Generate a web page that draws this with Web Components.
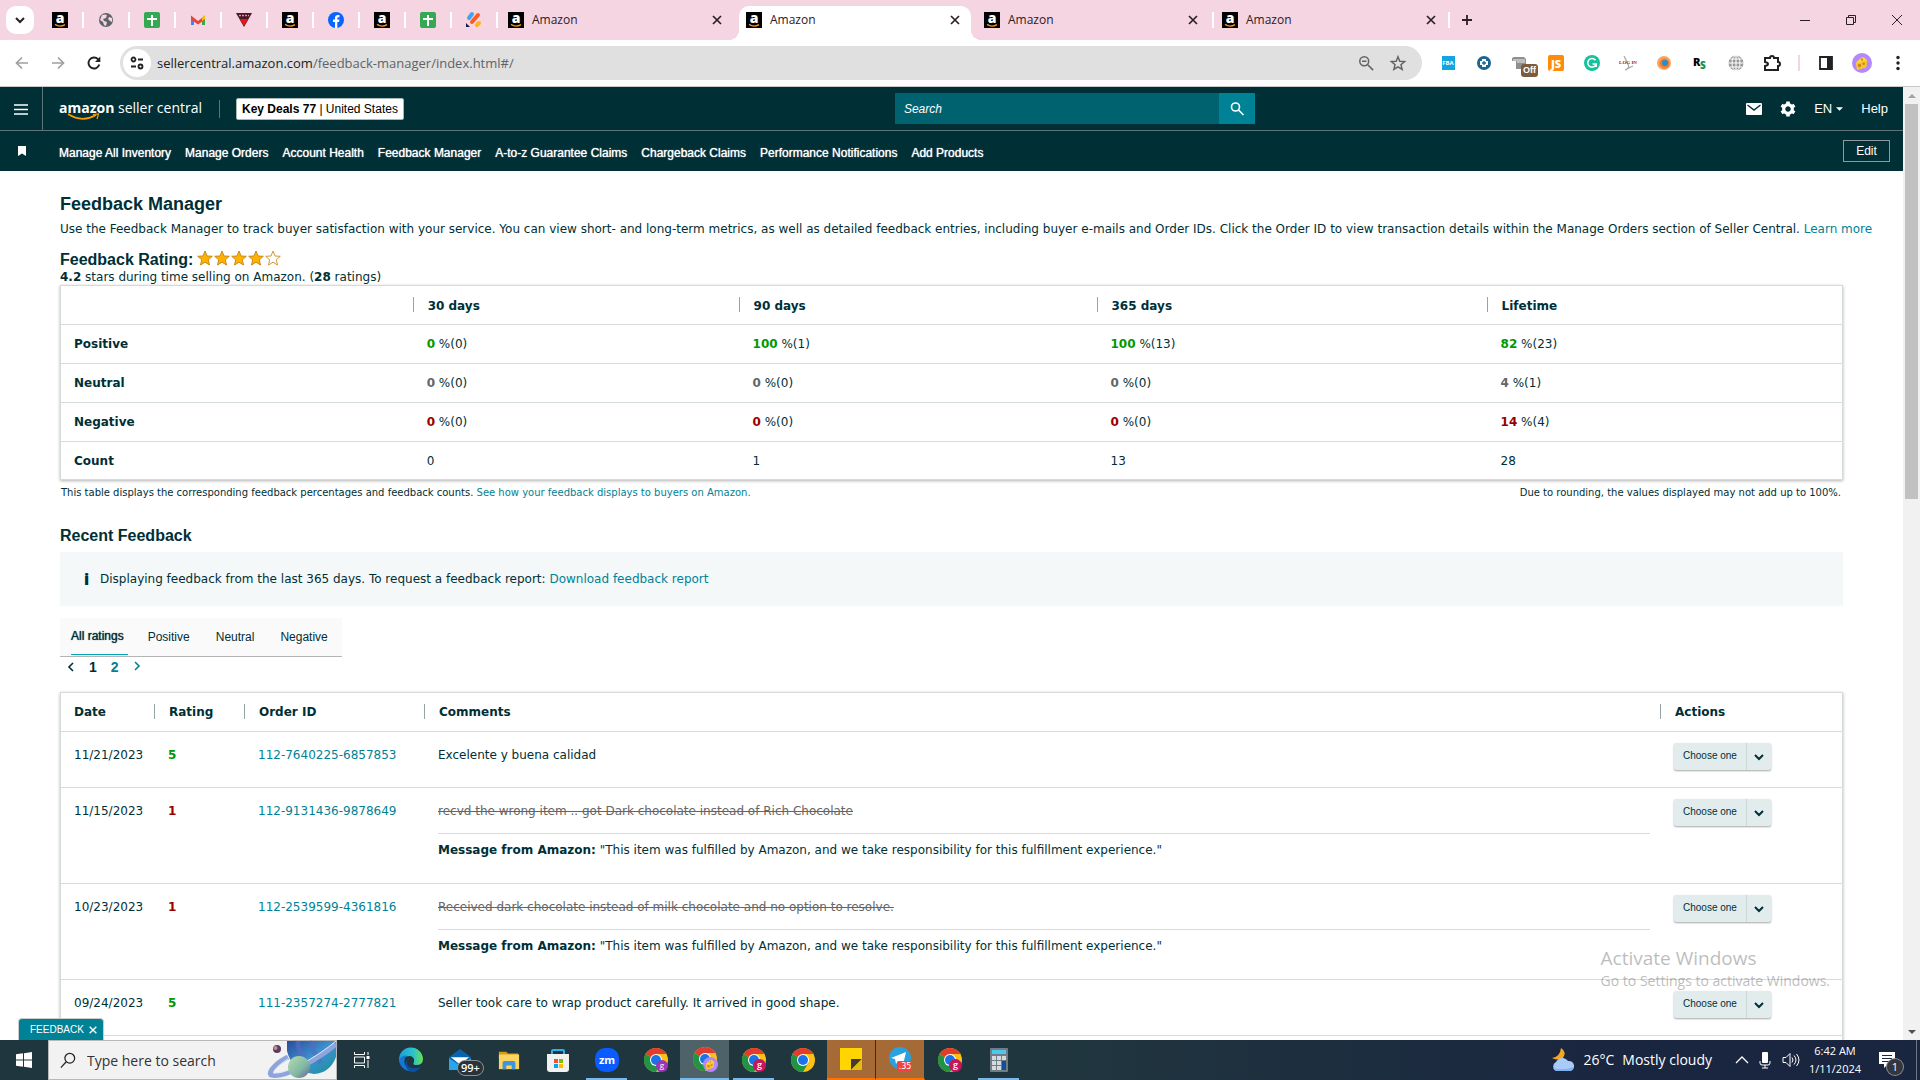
<!DOCTYPE html>
<html lang="en">
<head>
<meta charset="utf-8">
<title>Feedback Manager</title>
<style>
  :root {
    --ink: #002f36;
    --link: #008296;
    --line: #d5dbdb;
    --green: #009900;
    --red: #990000;
    --font-body: "DejaVu Sans", Verdana, sans-serif;
    --font-nav: "Liberation Sans", Arial, sans-serif;
    --font-system: "Open Sans", "Segoe UI", sans-serif;
  }

  body {
    margin: 0;
    height: 100vh;
    overflow: hidden;
    background: #fff;
    color: var(--ink);
    font-family: var(--font-body);
    font-size: 12px;
    line-height: 16px;
  }
</style>
</head>
<body>
<ui-desktop>
  <ui-tab-strip slot="browser"></ui-tab-strip>
  <ui-toolbar slot="browser"></ui-toolbar>
  <ui-page slot="page">
    <ui-header></ui-header>
    <ui-feedback-manager></ui-feedback-manager>
  </ui-page>
  <ui-taskbar slot="taskbar"></ui-taskbar>
</ui-desktop>

<script>
const chromeArt = `
  <circle cx="12" cy="12" r="12" fill="#fbc116"/>
  <path d="M12 12 1.6 6A12 12 0 0 1 22.4 6H12z" fill="#e33b2e"/>
  <path d="M12 12 1.6 6A12 12 0 0 0 12 24l5.2-9z" fill="#229342"/>
  <circle cx="12" cy="12" r="6" fill="#fff"/>
  <circle cx="12" cy="12" r="5" fill="#1a73e8"/>`;

const cheeseArt = `
  <path d="M5 11 12 5q4 0 6 4l-1 8-11 3z" fill="#fdd835"/>
  <path d="M5 12 18 9l-1 8-11 3z" fill="#fbc02d"/>
  <circle cx="9" cy="15" r="2" fill="#c98a10"/><circle cx="14" cy="13" r="1.5" fill="#c98a10"/><circle cx="12" cy="8" r="1.3" fill="#c98a10"/>`;

const icons = {
  amazon: ['0 0 16 16', `<rect width="16" height="16"/><text x="8" y="11" text-anchor="middle" font-family="Open Sans" font-weight="800" font-size="14" fill="#fff">a</text><path d="M3 12.4q5 3.2 10 .2" fill="none" stroke="#f90" stroke-width="1.3"/>`],
  globe: ['0 0 16 16', `<circle cx="8" cy="8" r="7" fill="#5f6368"/><path d="M4 3q3-1 5 0l-1 3-3 1 1 2 3 1-1 4-2-1-1-3-3-2zM11 5l3 1v4l-2-1-2-2z" fill="#f6d5e3"/>`],
  sheets: ['0 0 16 16', `<rect width="16" height="16" rx="2" fill="#34a853"/><path d="M8 3v11M3 7h10" stroke="#fff" stroke-width="2"/>`],
  gmail: ['0 0 16 16', `<path d="M1 4v9h3V7z" fill="#4285f4"/><path d="M15 4v9h-3V7z" fill="#34a853"/><path d="M1 3.500 8 9l7-5.500v4L8 12.500 1 7.500z" fill="#ea4335"/><path d="M12 6l3-3v4l-3 2z" fill="#fbbc04"/>`],
  shield: ['0 0 16 16', `<path d="M0 1h16L8 15z" fill="#4a1526"/><path d="M4 7h8l-4 7z" fill="#f01414"/><path d="M3 3.500h10" stroke="#d99" stroke-width="1.500" stroke-dasharray="2 1"/>`],
  facebook: ['0 0 16 16', `<circle cx="8" cy="8" r="8" fill="#0866ff"/><path d="M7 16V10H5V7.500h2V6q0-3 3-3h1.500v2.300H10.300q-1 0-1 1.200v1h2.200L11 10H9.300v6z" fill="#fff"/>`],
  jungle: ['0 0 16 16', `<g stroke-width="4" stroke-linecap="round"><path d="M3 6l3-4" stroke="#3da5f4"/><path d="M6 10l6-7" stroke="#ff5a1f"/><path d="M11 13l2-2" stroke="#fdb515"/></g><path d="M0 11l4 4H0z" fill="#1d1650"/>`],
  chevron: ['0 0 12 12', `<path d="M2 4l4 4 4-4" fill="none" stroke="currentColor" stroke-width="2"/>`],
  chevronLeft: ['2 0 8 12', `<path d="M8 2 4 6l4 4" fill="none" stroke="currentColor" stroke-width="1.600"/>`],
  chevronRight: ['2 0 8 12', `<path d="M4 2l4 4-4 4" fill="none" stroke="currentColor" stroke-width="1.600"/>`],
  close: ['0 0 12 12', `<path d="M2 2l8 8M10 2l-8 8" stroke="currentColor" stroke-width="1.700"/>`],
  closeThin: ['0 0 12 12', `<path d="M1 1l10 10M11 1 1 11" stroke="currentColor"/>`],
  plus: ['0 0 12 12', `<path d="M6 1v10M1 6h10" stroke="currentColor" stroke-width="1.800"/>`],
  minimize: ['0 0 12 12', `<path d="M1 6.500h10" stroke="currentColor"/>`],
  restore: ['0 0 12 12', `<path d="M1.500 3.500h7v7h-7zM3.500 3.500v-2h7v7h-2" fill="none" stroke="currentColor"/>`],
  back: ['0 0 16 16', `<path d="M14 8H3M8 2.500 2.500 8 8 13.500" fill="none" stroke="currentColor" stroke-width="1.700"/>`],
  forward: ['0 0 16 16', `<path d="M2 8h11M8 2.500 13.500 8 8 13.500" fill="none" stroke="currentColor" stroke-width="1.700"/>`],
  reload: ['0 0 16 16', `<path d="M13.300 9.500A5.500 5.500 0 1 1 12 4.200L13.500 6" fill="none" stroke="currentColor" stroke-width="1.900"/><path d="M14.300 1.500v5.500H9z" fill="currentColor"/>`],
  tune: ['0 0 16 16', `<g fill="none" stroke="currentColor" stroke-width="1.800"><circle cx="4.500" cy="4.500" r="2"/><circle cx="11.500" cy="11.500" r="2"/><path d="M9 4.500h5M2 11.500h5"/></g>`],
  zoomOut: ['0 0 18 18', `<g fill="none" stroke="currentColor" stroke-width="1.700"><circle cx="7" cy="7" r="5"/><path d="M11 11l6 6M4.500 7h5"/></g>`],
  star: ['0 0 18 18', `<path d="M9 2l2 5 5.500.400-4.200 3.500 1.400 5.300L9 13.400l-4.700 2.800 1.400-5.300L1.500 7.400 7 7z" fill="none" stroke="currentColor" stroke-width="1.600"/>`],
  extFba: ['0 0 16 16', `<rect x="2" y="1" width="13" height="14" fill="#12a5df"/><text x="8" y="10" text-anchor="middle" font-family="Open Sans" font-weight="700" font-size="6" fill="#fff">FBA</text>`],
  extPlus: ['0 0 16 16', `<circle cx="8" cy="8" r="7" fill="#1d6491"/><path d="M8 4v8M4 8h8" stroke="#fff" stroke-width="4" /><path d="M8 6v4M6 8h4" stroke="#1d6491" stroke-width="1.300"/>`],
  extCard: ['0 0 16 16', `<path d="M0 6V3l2-1h10l2 2v10H4V6z" fill="#8f8f8f"/><path d="M1 5h12M5 7h8" stroke="#eee"/>`],
  extJs: ['0 0 16 16', `<rect width="16" height="16" rx="2" fill="#ff8a0c"/><text x="8" y="13" text-anchor="middle" font-family="Open Sans" font-weight="800" font-size="11" fill="#fff">JS</text>`],
  extGram: ['0 0 16 16', `<circle cx="8" cy="8" r="8" fill="#15c39a"/><path d="M11.500 5.200A4.300 4.300 0 1 0 12.200 9H8.500M12.200 8.500V12" fill="none" stroke="#fff" stroke-width="1.500"/>`],
  extLogin: ['0 0 16 16', `<path d="M4 1l3 6 2 5-3 3M13 11l-8 4" fill="none" stroke="#aaa" stroke-width="1.300"/><text x="8" y="9" text-anchor="middle" font-family="Liberation Serif" font-weight="700" font-size="5" fill="#922">LOG IN</text>`],
  extEye: ['0 0 16 16', `<circle cx="8" cy="8" r="7" fill="#f6a66a"/><circle cx="8.500" cy="8.500" r="5" fill="#fb7b25"/><circle cx="9" cy="8" r="3" fill="#1e90d6"/>`],
  extRs: ['0 0 16 16', `<text x="1" y="11" font-family="Open Sans" font-weight="800" font-size="11">R</text><text x="8" y="14" font-family="Open Sans" font-weight="800" font-size="10" fill="#17924c">S</text>`],
  extGlobe: ['0 0 16 16', `<circle cx="8" cy="8" r="7.500" fill="#999"/><g fill="none" stroke="#fff"><path d="M8 0v16M0 8h16M2 4h12M2 12h12"/><ellipse cx="8" cy="8" rx="4" ry="7.500"/></g>`],
  puzzle: ['0 0 18 18', `<path d="M2 4h5a2 2 0 0 1 4 0h4v4a2 2 0 0 1 0 4v4H2v-4q3-.500 3-2T2 8z" fill="none" stroke="currentColor" stroke-width="2"/>`],
  panel: ['0 0 16 16', `<path d="M2 2h12v12H2z" fill="none" stroke="currentColor" stroke-width="1.800"/><path d="M9 2h5v12H9z" fill="currentColor"/>`],
  cheese: ['0 0 24 24', `<circle cx="12" cy="12" r="12" fill="#b388ff"/>${cheeseArt}`],
  dots: ['0 0 16 16', `<g fill="currentColor"><circle cx="8" cy="2.500" r="1.700"/><circle cx="8" cy="8" r="1.700"/><circle cx="8" cy="13.500" r="1.700"/></g>`],
  menu: ['0 0 14 12', `<path d="M0 2h14M0 6.500h14M0 11h14" stroke="currentColor" stroke-width="1.600"/>`],
  search: ['0 0 16 16', `<g fill="none" stroke="currentColor" stroke-width="1.600"><circle cx="6.500" cy="6" r="4"/><path d="M9.500 9l5 5"/></g>`],
  mail: ['0 0 16 14', `<rect y="1" width="16" height="12" rx="1" fill="currentColor"/><path d="M1.500 3 8 8l6.500-5" fill="none" stroke="#002f36" stroke-width="1.400"/>`],
  gear: ['0 0 16 16', `<circle cx="8" cy="8" r="4.200" fill="none" stroke="currentColor" stroke-width="3.400"/><g stroke="currentColor" stroke-width="3.600"><path d="M8 .500v3M8 12.500v3M1.500 4.200l2.600 1.500M11.900 10.300l2.600 1.500M1.500 11.800l2.600-1.500M11.900 5.700l2.600-1.500"/></g><circle cx="8" cy="8" r="2.500" fill="#002f36"/>`],
  caret: ['0 0 8 4', `<path d="M0 0h8L4 4z" fill="currentColor"/>`],
  caretUp: ['0 0 8 4', `<path d="M0 4h8L4 0z" fill="currentColor"/>`],
  bookmark: ['0 0 8 10', `<path d="M0 0h8v10L4 7.500 0 10z" fill="currentColor"/>`],
  smile: ['0 0 34 8', `<path d="M1 1q14 9 28 1" fill="none" stroke="#f90" stroke-width="1.700"/><path d="M26 1.500 31.500 1 30 6" fill="none" stroke="#f90" stroke-width="1.200"/>`],
  starFull: ['0 0 16 16', `<path d="M8 1l2 5 5.300.300-4 3.500L12.500 15 8 12.200 3.500 15l1.200-5.200-4-3.500L6 6z" fill="#ffb300" stroke="#c98a1b"/>`],
  starEmpty: ['0 0 16 16', `<path d="M8 1l2 5 5.300.300-4 3.500L12.500 15 8 12.200 3.500 15l1.200-5.200-4-3.500L6 6z" fill="#fff" stroke="#d19a34"/>`],
  windows: ['0 0 16 16', `<path d="M0 2.300 7 1.300v6.200H0zM8 1.200 16 0v7.500H8zM0 8.500h7v6.200L0 13.700zM8 8.500h8V16l-8-1.200z" fill="#fff"/>`],
  lens: ['0 0 18 18', `<g fill="none" stroke="currentColor" stroke-width="1.400"><circle cx="11" cy="7" r="5.500"/><path d="M7 11l-6 6.500"/></g>`],
  planets: ['0 0 68 38', `
    <defs>
      <linearGradient id="p" x1="0" x2="1" y1="0" y2="1"><stop offset="0" stop-color="#2c4a9c"/><stop offset=".5" stop-color="#3c93cf"/><stop offset="1" stop-color="#1c8f9a"/></linearGradient>
      <linearGradient id="m" x1="0" x2="1" y1="0" y2="1"><stop offset="0" stop-color="#b9dcae"/><stop offset=".6" stop-color="#7fb8a4"/><stop offset="1" stop-color="#6b5c94"/></linearGradient>
    </defs>
    <path d="M19 0H68V16Q62 32 46 33 24 30 19 10z" fill="url(#p)"/>
    <path d="M30 0q-1 8 7 16M45 0q-2 10 8 22" fill="none" stroke="#5a69c4" stroke-width="5" opacity=".6"/>
    <path d="M20 16C8 22 0 31 3 34q8 3 30-8Q55 14 68 3" fill="none" stroke="#8ea5dc" stroke-width="5"/>
    <path d="M20 18C10 24 5 30 6 32q8 1 26-8Q54 12 68 0" fill="none" stroke="#e3e8fb" stroke-width="1"/>
    <circle cx="31" cy="26" r="11" fill="url(#m)"/>
    <circle cx="9" cy="8" r="4" fill="#5c3c62"/><circle cx="7.500" cy="7" r="2" fill="#c18e8e"/>`],
  taskView: ['0 0 16 16', `<g fill="none" stroke="#fff"><path d="M.500 0v2.500h10V0M.500 16v-2.500h10V16M.500 5h10v6H.500zM14 0v3M14 8v8"/></g><path d="M12.500 4h3v3h-3z" fill="#fff"/>`],
  edge: ['0 0 24 24', `
    <defs><linearGradient id="e" x1="0" x2="1"><stop offset="0" stop-color="#1ba0e1"/><stop offset=".6" stop-color="#2cc3c8"/><stop offset="1" stop-color="#6be24a"/></linearGradient></defs>
    <path d="M0 12A12 12 0 0 1 24 11q0 6-7 6c-3 0-3-1-2-3q1-5-4-6Q3 8 0 14z" fill="url(#e)"/>
    <path d="M0 12q2-5 8-4.500-4 3-2 9 3 6 10 6a12 12 0 0 1-16-10.500z" fill="#1478d2"/>
    <path d="M8 12q-1 8 6 8 5 1 8-2-3 6-9 6Q4 21 8 12z" fill="#0c4fa3"/>`],
  outlook: ['0 0 24 24', `<path d="M0 9 12 0l12 9v12H0z" fill="#0a64ad"/><path d="M2 9h20l-10 8z" fill="#fff"/><path d="M0 10l12 8 12-8v13H0z" fill="#28a8ea"/>`],
  explorer: ['0 0 24 24', `<path d="M1 3h8l2 2h11v5H1z" fill="#d79b14"/><path d="M1 6h22v16H1z" fill="#fcd462"/><path d="M5 22v-7q0-2 2-2h10q2 0 2 2v7h-4v-4H9v4z" fill="#3f95db"/>`],
  store: ['0 0 24 24', `<path d="M6 6V3q0-1 1-1h10q1 0 1 1v3" fill="none" stroke="#28b3ee" stroke-width="2"/><path d="M1 6h22v15q0 3-3 3H4q-3 0-3-3z" fill="#f1f1f1"/><path d="M8 11h4v4H8z" fill="#f35325"/><path d="M13 11h4v4h-4z" fill="#81bc06"/><path d="M8 16h4v4H8z" fill="#05a6f0"/><path d="M13 16h4v4h-4z" fill="#ffba08"/>`],
  zoom: ['0 0 24 24', `<rect width="24" height="24" rx="10" fill="#0b5cff"/><text x="12" y="16" text-anchor="middle" font-family="Open Sans" font-weight="700" font-size="11" fill="#fff">zm</text>`],
  chrome: ['0 0 24 24', chromeArt],
  chromeViolet: ['0 0 24 24', `${chromeArt}<circle cx="18" cy="18" r="6" fill="#9c35b4"/><text x="18" y="20" text-anchor="middle" font-family="Open Sans" font-size="8" fill="#fff">g</text>`],
  chromePink: ['0 0 24 24', `${chromeArt}<circle cx="17.500" cy="17.500" r="6.500" fill="#c2185b"/><text x="17.500" y="20" text-anchor="middle" font-family="Open Sans" font-weight="600" font-size="9" fill="#fff">g</text>`],
  chromeCheese: ['0 0 24 24', `${chromeArt}<circle cx="17.500" cy="17.500" r="7.500" fill="#b388ff"/><g transform="translate(10 10) scale(.620)">${cheeseArt}</g>`],
  sticky: ['0 0 24 24', `<path d="M1 1h22v22H1z" fill="#ffd400"/><path d="M12 12h11L12 23z" fill="#433c36"/><path d="M23 12v11H12z" fill="#e6bd0a"/>`],
  telegram: ['0 0 24 24', `<circle cx="12" cy="11" r="11" fill="#29a1de"/><path d="M3 11l15-6-3 13-5-4-2 3-1-5z" fill="#fff"/><rect x="9" y="14" width="15" height="10" rx="2" fill="#f4433c"/><text x="17" y="22" text-anchor="middle" font-family="DejaVu Sans" font-size="8" fill="#fff">.35</text>`],
  calculator: ['0 0 24 24', `<rect x="3" width="18" height="24" rx="1" fill="#727c85"/><path d="M5 2h14v4H5z" fill="#4cc8ef"/><path d="M5 8h4v4H5zM10 8h4v4h-4zM15 8h4v4h-4zM5 13h4v4H5zM10 13h4v4h-4zM5 18h4v4H5zM10 18h4v4h-4z" fill="#d5dade"/><path d="M15 13h4v9h-4z" fill="#124f98"/>`],
  weather: ['0 0 24 24', `<path d="M10 0q6 4 2 10Q7 13 1 10q8-1 9-10z" fill="#f5a623"/><path d="M5 23a5 5 0 0 1 0-9 7 7 0 0 1 12-1 5 5 0 0 1 2 10z" fill="#a9cbf7"/><path d="M2 20q10 3 21-1-1 4-4 4H5q-2-.500-3-3z" fill="#7fb0ef"/>`],
  up: ['0 0 12 12', `<path d="M0 9l6-6 6 6" fill="none" stroke="currentColor" stroke-width="1.300"/>`],
  mic: ['0 0 12 18', `<rect x="3" y="1" width="6" height="11" rx="1" fill="#fff"/><path d="M1 10v2q0 2 2 2h6q2 0 2-2v-2M6 14v3M3 17h6" fill="none" stroke="#fff"/>`],
  speaker: ['0 0 18 16', `<g fill="none" stroke="#fff"><path d="M1 5.500h3l4-4v13l-4-4H1zM10 5.500q2 2.500 0 5M12 3.500q4 4.500 0 9M14.500 2q5 6 0 12"/></g>`],
  notify: ['0 0 16 16', `<path d="M0 0h16v12H9l-4 4v-4H0z" fill="#fff"/><path d="M3 3.500h10M3 6.500h10M3 9.500h7" stroke="#1a2540"/>`]
};

// draws one entry of the icon list, sized by its width/height attributes
class IconComponent extends HTMLElement {
  constructor() {
    super();
    const shadow = this.attachShadow({mode: 'open'});
    const [viewBox, art] = icons[this.getAttribute('name')];
    const width = this.getAttribute('width') || 16;
    const height = this.getAttribute('height') || width;
    shadow.innerHTML = `
      <style>
        :host { display: inline-flex; flex: none; }
        svg { display: block; overflow: visible; }
      </style>
      <svg width="${width}" height="${height}" viewBox="${viewBox}" aria-hidden="true">${art}</svg>
    `;
  }
}

class DesktopComponent extends HTMLElement {
  constructor() {
    super();
    this.attachShadow({mode: 'open'}).innerHTML = `
      <style>
        :host {
          display: flex;
          flex-direction: column;
          height: 100vh;
        }

        ::slotted([slot="page"]) {
          flex: 1;
          min-height: 0;
        }

        .watermark {
          position: absolute;
          right: 90px;
          bottom: 89px;
          color: #000;
          opacity: .26;
          font-family: var(--font-system);
          font-size: 14px;
          line-height: 20px;
          pointer-events: none;
        }

        .watermark strong {
          display: block;
          font-weight: 400;
          font-size: 19px;
          line-height: 26px;
        }
      </style>
      <slot name="browser"></slot>
      <slot name="page"></slot>
      <slot name="taskbar"></slot>
      <div class="watermark"><strong>Activate Windows</strong>Go to Settings to activate Windows.</div>
    `;
  }
}

class TabStripComponent extends HTMLElement {
  constructor() {
    super();
    const pinned = ['amazon', 'globe', 'sheets', 'gmail', 'shield', 'amazon', 'facebook', 'amazon', 'sheets', 'jungle'];
    const wide = ['', 'active', '', 'line'];
    this.attachShadow({mode: 'open'}).innerHTML = `
      <style>
        :host {
          display: flex;
          align-items: center;
          height: 40px;
          background: #f6d5e3;
          color: #2b2024;
          font-family: var(--font-system);
        }

        button {
          display: flex;
          align-items: center;
          justify-content: center;
          border: 0;
          padding: 0;
          background: none;
          color: inherit;
        }

        .list {
          width: 28px;
          height: 28px;
          margin: 0 4px 0 6px;
          border-radius: 10px;
          background: #fff;
        }

        .pin {
          display: flex;
          justify-content: center;
          width: 44px;
          border-right: 2px solid #fff;
        }

        .tab {
          display: flex;
          align-items: center;
          box-sizing: border-box;
          width: 238px;
          height: 16px;
          padding: 0 13px 0 10px;
          font-size: 12px;
        }

        .tab span {
          flex: 1;
          padding-left: 8px;
        }

        .tab.line {
          border-left: 2px solid #fff;
          border-right: 2px solid #fff;
          padding: 0 11px 0 8px;
        }

        .tab.active {
          position: relative;
          align-self: flex-end;
          height: 34px;
          width: 232px;
          margin: 0 3px;
          padding: 0 10px 6px 7px;
          border-radius: 10px 10px 0 0;
          background: #fff;
        }

        /* concave feet of the open tab */
        .tab.active::before,
        .tab.active::after {
          content: "";
          position: absolute;
          bottom: 0;
          width: 10px;
          height: 10px;
        }

        .tab.active::before {
          right: 100%;
          background: radial-gradient(circle at 0 0, transparent 10px, #fff 10px);
        }

        .tab.active::after {
          left: 100%;
          background: radial-gradient(circle at 100% 0, transparent 10px, #fff 10px);
        }

        .new {
          width: 34px;
        }

        .controls {
          display: flex;
          margin-left: auto;
        }

        .controls button {
          width: 46px;
        }
      </style>
      <button class="list" aria-label="Search tabs"><ui-icon name="chevron" width="12"></ui-icon></button>
      ${pinned.map(name => `<div class="pin"><ui-icon name="${name}"></ui-icon></div>`).join('')}
      ${wide.map(type => `
        <div class="tab ${type}">
          <ui-icon name="amazon"></ui-icon>
          <span>Amazon</span>
          <button aria-label="Close tab"><ui-icon name="close" width="12"></ui-icon></button>
        </div>
      `).join('')}
      <button class="new" aria-label="New tab"><ui-icon name="plus" width="12"></ui-icon></button>
      <div class="controls">
        <button aria-label="Minimize"><ui-icon name="minimize" width="12"></ui-icon></button>
        <button aria-label="Restore"><ui-icon name="restore" width="12"></ui-icon></button>
        <button aria-label="Close"><ui-icon name="closeThin" width="12"></ui-icon></button>
      </div>
    `;
  }
}

class ToolbarComponent extends HTMLElement {
  constructor() {
    super();
    const extensions = ['extFba', 'extPlus', 'extCard', 'extJs', 'extGram', 'extLogin', 'extEye', 'extRs', 'extGlobe'];
    this.attachShadow({mode: 'open'}).innerHTML = `
      <style>
        :host {
          display: flex;
          align-items: center;
          box-sizing: border-box;
          height: 47px;
          padding: 0 4px;
          border-bottom: 1px solid #c8c8c8;
          background: #fff;
          color: #202124;
          font-family: var(--font-system);
        }

        button {
          position: relative;
          display: flex;
          align-items: center;
          justify-content: center;
          width: 36px;
          height: 34px;
          padding: 0;
          border: 0;
          background: none;
          color: inherit;
        }

        button[disabled] {
          color: #a0a0a0;
        }

        .address {
          display: flex;
          flex: 1;
          align-items: center;
          height: 34px;
          margin: 0 8px;
          padding: 0 8px 0 3px;
          border-radius: 17px;
          background: #e0e0e0;
          color: #5f6368;
          font-size: 13px;
        }

        .address button {
          width: 32px;
        }

        .address .site {
          width: 28px;
          height: 28px;
          margin-right: 6px;
          border-radius: 50%;
          background: #fff;
          color: #202124;
        }

        .url {
          flex: 1;
        }

        .url b {
          color: #202124;
          font-weight: 400;
        }

        .badge {
          position: absolute;
          right: 0;
          bottom: 3px;
          padding: 0 2px;
          border-radius: 3px;
          background: #7c5c40;
          color: #fff;
          font-size: 9px;
          font-weight: 700;
          line-height: 13px;
        }

        .divider {
          width: 2px;
          height: 16px;
          margin: 0 8px;
          background: #f6d5e3;
        }
      </style>
      <button disabled aria-label="Back"><ui-icon name="back"></ui-icon></button>
      <button disabled aria-label="Forward"><ui-icon name="forward"></ui-icon></button>
      <button aria-label="Reload"><ui-icon name="reload"></ui-icon></button>
      <div class="address">
        <button class="site" aria-label="Site information"><ui-icon name="tune"></ui-icon></button>
        <span class="url"><b>sellercentral.amazon.com</b>/feedback-manager/index.html#/</span>
        <button aria-label="Zoom"><ui-icon name="zoomOut" width="16"></ui-icon></button>
        <button aria-label="Bookmark this tab"><ui-icon name="star"></ui-icon></button>
      </div>
      ${extensions.map(name => `
        <button aria-label="Extension"><ui-icon name="${name}"></ui-icon>${name === 'extCard' ? '<span class="badge">Off</span>' : ''}</button>
      `).join('')}
      <button aria-label="Extensions"><ui-icon name="puzzle" width="18"></ui-icon></button>
      <span class="divider"></span>
      <button aria-label="Side panel"><ui-icon name="panel"></ui-icon></button>
      <button aria-label="Profile"><ui-icon name="cheese" width="20"></ui-icon></button>
      <button aria-label="Menu"><ui-icon name="dots" width="16"></ui-icon></button>
    `;
  }
}

class PageComponent extends HTMLElement {
  constructor() {
    super();
    this.attachShadow({mode: 'open'}).innerHTML = `
      <style>
        :host {
          position: relative;
          display: flex;
          overflow: hidden;
        }

        .content {
          flex: 1;
          min-width: 0;
        }

        .scrollbar {
          display: flex;
          flex-direction: column;
          width: 17px;
          background: #f1f1f1;
          color: #505050;
        }

        .scrollbar span {
          display: flex;
          align-items: center;
          justify-content: center;
          height: 17px;
        }

        .scrollbar span:first-child {
          color: #a3a3a3;
        }

        .track {
          flex: 1;
          padding: 0 2px;
        }

        .thumb {
          height: 43%;
          background: #c1c1c1;
        }

        .feedback {
          position: absolute;
          left: 18px;
          bottom: 0;
          display: flex;
          align-items: center;
          gap: 4px;
          height: 22px;
          padding: 0 5px 0 11px;
          border: 1px solid #ccc;
          border-bottom: 0;
          border-radius: 4px 4px 0 0;
          background: var(--link);
          color: #fff;
          font: 10px var(--font-nav);
        }
      </style>
      <div class="content"><slot></slot></div>
      <div class="scrollbar">
        <span><ui-icon name="caretUp" width="8" height="4"></ui-icon></span>
        <div class="track"><div class="thumb"></div></div>
        <span><ui-icon name="caret" width="8" height="4"></ui-icon></span>
      </div>
      <button class="feedback">FEEDBACK <ui-icon name="close" width="10"></ui-icon></button>
    `;
  }
}

class HeaderComponent extends HTMLElement {
  constructor() {
    super();
    const links = ['Manage All Inventory', 'Manage Orders', 'Account Health', 'Feedback Manager', 'A-to-z Guarantee Claims', 'Chargeback Claims', 'Performance Notifications', 'Add Products'];
    this.attachShadow({mode: 'open'}).innerHTML = `
      <style>
        :host {
          display: block;
          background: var(--ink);
          color: #fff;
          font-family: var(--font-nav);
        }

        a {
          color: inherit;
          text-decoration: none;
        }

        button {
          display: flex;
          align-items: center;
          justify-content: center;
          padding: 0;
          border: 0;
          background: none;
          color: inherit;
          font: inherit;
        }

        .top {
          display: grid;
          grid-template-columns: 58fr 360px 42fr;
          align-items: center;
          height: 43px;
          border-bottom: 1px solid #5f7478;
        }

        .brand {
          display: flex;
          align-items: center;
          height: 100%;
        }

        .burger {
          width: 43px;
          height: 100%;
          border-right: 1px solid #5f7478;
        }

        .logo {
          position: relative;
          margin: 0 17px 0 16px;
          padding-bottom: 2px;
          font: 14px/20px var(--font-system);
        }

        .logo ui-icon {
          position: absolute;
          left: 8px;
          top: 15px;
        }

        .account {
          margin-left: 16px;
          padding: 2px 5px;
          border: 1px solid #aab7b8;
          border-radius: 2px;
          background: #fff;
          color: #000;
          font-size: 12px;
          line-height: 16px;
        }

        .rule {
          width: 1px;
          height: 18px;
          background: #5f7478;
        }

        .search {
          display: flex;
          height: 31px;
        }

        .search input {
          flex: 1;
          min-width: 0;
          padding: 0 9px;
          border: 0;
          background: #00616f;
          color: #fff;
          font: italic 12px var(--font-nav);
        }

        .search input::placeholder {
          color: #fff;
          opacity: 1;
        }

        .search button {
          width: 36px;
          background: var(--link);
        }

        .tools {
          display: flex;
          justify-content: flex-end;
          align-items: center;
          gap: 18px;
          padding-right: 15px;
          font-size: 13px;
        }

        .tools a {
          display: flex;
        }

        .language {
          gap: 4px;
        }

        .links {
          display: flex;
          align-items: center;
          gap: 14px;
          height: 40px;
          padding-right: 13px;
          font-size: 12px;
        }

        .links a {
          padding-top: 4px;
          text-shadow: 0 0 1px #fff;
        }

        .saved {
          width: 43px;
          margin-right: 2px;
        }

        .edit {
          width: 47px;
          height: 22px;
          margin-left: auto;
          border: 1px solid #8a9a9d;
        }
      </style>
      <div class="top">
        <div class="brand">
          <button class="burger" aria-label="Menu"><ui-icon name="menu" width="14" height="12"></ui-icon></button>
          <a class="logo" href="#"><b>amazon</b> seller central<ui-icon name="smile" width="34" height="8"></ui-icon></a>
          <span class="rule"></span>
          <button class="account"><span><b>Key Deals 77</b> | United States</span></button>
        </div>
        <form class="search">
          <input type="text" placeholder="Search" aria-label="Search">
          <button type="button" aria-label="Submit search"><ui-icon name="search"></ui-icon></button>
        </form>
        <div class="tools">
          <a href="#" aria-label="Messages"><ui-icon name="mail" height="14"></ui-icon></a>
          <a href="#" aria-label="Settings"><ui-icon name="gear"></ui-icon></a>
          <button class="language">EN <ui-icon name="caret" width="7" height="4"></ui-icon></button>
          <a href="#">Help</a>
        </div>
      </div>
      <nav class="links">
        <button class="saved" aria-label="Saved pages"><ui-icon name="bookmark" width="8" height="10"></ui-icon></button>
        ${links.map(text => `<a href="#">${text}</a>`).join('')}
        <button class="edit">Edit</button>
      </nav>
    `;
  }
}

// white bordered box that both tables sit in
class CardComponent extends HTMLElement {
  constructor() {
    super();
    this.attachShadow({mode: 'open'}).innerHTML = `
      <style>
        :host {
          display: block;
          border: 1px solid var(--line);
          background: #fff;
          box-shadow: 0 1px 3px rgba(0, 0, 0, .3);
        }
      </style>
      <slot></slot>
    `;
  }
}

const tableStyles = `
  table {
    width: 100%;
    border-spacing: 0;
    table-layout: fixed;
  }

  th, td {
    box-sizing: border-box;
    padding: 0 13px;
    border-bottom: 1px solid var(--line);
    text-align: left;
  }

  thead th {
    position: relative;
    height: 39px;
  }

  thead * + th {
    padding-left: 14px;
  }

  thead * + th::before {
    content: "";
    position: absolute;
    left: -1px;
    top: 11px;
    width: 1px;
    height: 15px;
    background: #95a5a6;
  }
`;

class MetricsComponent extends HTMLElement {
  constructor() {
    super();
    const rows = [
      ['Positive', 'green', ['0', '0'], ['100', '1'], ['100', '13'], ['82', '23']],
      ['Neutral', 'gray', ['0', '0'], ['0', '0'], ['0', '0'], ['4', '1']],
      ['Negative', 'red', ['0', '0'], ['0', '0'], ['0', '0'], ['14', '4']]
    ];
    this.attachShadow({mode: 'open'}).innerHTML = `
      <style>
        :host { display: block; }
        ${tableStyles}
        th, td { height: 39px; }
        thead th { padding-top: 2px; }
        tbody tr:last-child > * { height: 37px; border-bottom: 0; }
        .green b { color: var(--green); }
        .gray b { color: #666; }
        .red b { color: var(--red); }
      </style>
      <ui-card>
        <table>
          <colgroup>
            <col style="width: 19.8%"><col style="width: 18.3%"><col style="width: 20.1%"><col style="width: 21.9%"><col>
          </colgroup>
          <thead>
            <tr><td></td><th>30 days</th><th>90 days</th><th>365 days</th><th>Lifetime</th></tr>
          </thead>
          <tbody>
            ${rows.map(([label, tone, ...cells]) => `
              <tr class="${tone}"><th>${label}</th>${cells.map(([percent, count]) => `<td><b>${percent}</b> %(${count})</td>`).join('')}</tr>
            `).join('')}
            <tr><th>Count</th><td>0</td><td>1</td><td>13</td><td>28</td></tr>
          </tbody>
        </table>
      </ui-card>
    `;
  }
}

class ActionSelectComponent extends HTMLElement {
  constructor() {
    super();
    this.attachShadow({mode: 'open'}).innerHTML = `
      <style>
        :host {
          position: relative;
          display: inline-flex;
          width: 97px;
          height: 27px;
          border-radius: 2px;
          background: #e2ecec;
          box-shadow: 0 1px 2px rgba(0, 0, 0, .35);
        }

        select {
          appearance: none;
          width: 100%;
          padding: 0 24px 2px 9px;
          border: 0;
          background: none;
          color: var(--ink);
          font: 10px var(--font-nav);
        }

        span {
          position: absolute;
          top: 0;
          right: 0;
          bottom: 0;
          display: flex;
          align-items: center;
          justify-content: center;
          width: 24px;
          border-left: 1px solid #cbd6d6;
          pointer-events: none;
        }
      </style>
      <select aria-label="Action"><option>Choose one</option></select>
      <span><ui-icon name="chevron" width="12"></ui-icon></span>
    `;
  }
}

class FeedbackListComponent extends HTMLElement {
  constructor() {
    super();
    const rows = [
      {date: '11/21/2023', rating: 5, order: '112-7640225-6857853', comment: 'Excelente y buena calidad'},
      {date: '11/15/2023', rating: 1, order: '112-9131436-9878649', comment: 'recvd the wrong item .. got Dark chocolate instead of Rich Chocolate', struck: true},
      {date: '10/23/2023', rating: 1, order: '112-2539599-4361816', comment: 'Received dark chocolate instead of milk chocolate and no option to resolve.', struck: true},
      {date: '09/24/2023', rating: 5, order: '111-2357274-2777821', comment: 'Seller took care to wrap product carefully. It arrived in good shape.'}
    ];
    this.attachShadow({mode: 'open'}).innerHTML = `
      <style>
        :host { display: block; }
        ${tableStyles}
        td {
          height: 56px;
          padding: 15px 11px 0 13px;
          vertical-align: top;
        }

        td:last-child {
          padding-top: 11px;
        }

        a {
          color: var(--link);
          text-decoration: none;
        }

        .good { color: var(--green); }
        .bad { color: var(--red); }

        s {
          display: block;
          padding-bottom: 14px;
          border-bottom: 1px solid var(--line);
          color: #666;
        }

        p {
          margin: 0;
          padding: 8px 0 25px;
        }
      </style>
      <ui-card>
        <table>
          <colgroup>
            <col style="width: 94px"><col style="width: 90px"><col style="width: 180px"><col><col style="width: 181px">
          </colgroup>
          <thead>
            <tr><th>Date</th><th>Rating</th><th>Order ID</th><th>Comments</th><th>Actions</th></tr>
          </thead>
          <tbody>
            ${rows.map(row => `
              <tr>
                <td>${row.date}</td>
                <td><b class="${row.rating > 3 ? 'good' : 'bad'}">${row.rating}</b></td>
                <td><a href="#">${row.order}</a></td>
                <td>${row.struck ? `<s>${row.comment}</s><p><b>Message from Amazon:</b> "This item was fulfilled by Amazon, and we take responsibility for this fulfillment experience."</p>` : row.comment}</td>
                <td><ui-action-select></ui-action-select></td>
              </tr>
            `).join('')}
            <tr><td colspan="5"></td></tr>
          </tbody>
        </table>
      </ui-card>
    `;
  }
}

class FeedbackManagerComponent extends HTMLElement {
  constructor() {
    super();
    this.attachShadow({mode: 'open'}).innerHTML = `
      <style>
        :host {
          display: block;
          padding: 21px 60px 0;
        }

        a {
          color: var(--link);
          text-decoration: none;
        }

        h1, h2, p {
          margin: 0;
        }

        h1, h2 {
          font-family: var(--font-nav);
          font-size: 16px;
          line-height: 20px;
        }

        h1 {
          font-size: 18px;
          line-height: 24px;
        }

        .intro {
          margin: 4px 0 12px;
          line-height: 18px;
          white-space: nowrap;
        }

        .rating {
          display: flex;
          gap: 4px;
        }

        .stars {
          display: flex;
          gap: 1px;
        }

        .score {
          line-height: 15px;
        }

        .notes {
          display: flex;
          justify-content: space-between;
          margin: 6px 2px 26px 1px;
          font-size: 10px;
          line-height: 14px;
        }

        .info {
          display: flex;
          align-items: center;
          height: 54px;
          margin: 6px 0 12px;
          padding-left: 24px;
          background: #f4f8f9;
        }

        .info b {
          width: 16px;
          font: 800 16px var(--font-system);
        }

        .tabs {
          display: inline-flex;
          height: 38px;
          padding: 0 14px 0 11px;
          border-bottom: 1px solid #b5b5b5;
          background: #fafafa;
          vertical-align: top;
        }

        .tabs button {
          height: 37px;
          padding: 0 6px 0 0;
          margin-right: 20px;
          border: 0;
          background: none;
          color: inherit;
          font: 12px var(--font-nav);
        }

        .tabs button:last-child {
          margin-right: 0;
          padding-right: 0;
        }

        .tabs .active {
          border-bottom: 1px solid #00a4b4;
          padding-right: 4px;
          text-shadow: 0 0 1px var(--ink);
        }

        .pages {
          display: flex;
          align-items: center;
          gap: 14px;
          height: 20px;
          margin: 0 0 15px 7px;
          font: bold 14px var(--font-nav);
        }
      </style>
      <h1>Feedback Manager</h1>
      <p class="intro">Use the Feedback Manager to track buyer satisfaction with your service. You can view short- and long-term metrics, as well as detailed feedback entries, including buyer e-mails and Order IDs. Click the Order ID to view transaction details within the Manage Orders section of Seller Central. <a href="#">Learn more</a></p>
      <div class="rating">
        <h2>Feedback Rating:</h2>
        <div class="stars">
          <ui-icon name="starFull"></ui-icon>
          <ui-icon name="starFull"></ui-icon>
          <ui-icon name="starFull"></ui-icon>
          <ui-icon name="starFull"></ui-icon>
          <ui-icon name="starEmpty"></ui-icon>
        </div>
      </div>
      <p class="score"><b>4.2</b> stars during time selling on Amazon. (<b>28</b> ratings)</p>
      <ui-metrics></ui-metrics>
      <div class="notes">
        <span>This table displays the corresponding feedback percentages and feedback counts. <a href="#">See how your feedback displays to buyers on Amazon.</a></span>
        <span>Due to rounding, the values displayed may not add up to 100%.</span>
      </div>
      <h2>Recent Feedback</h2>
      <div class="info"><b>i</b><span>Displaying feedback from the last 365 days. To request a feedback report: <a href="#">Download feedback report</a></span></div>
      <div class="tabs">
        <button class="active">All ratings</button>
        <button>Positive</button>
        <button>Neutral</button>
        <button>Negative</button>
      </div>
      <div class="pages">
        <ui-icon name="chevronLeft" width="8" height="12"></ui-icon>
        <span>1</span>
        <a href="#">2</a>
        <a href="#" aria-label="Next page"><ui-icon name="chevronRight" width="8" height="12"></ui-icon></a>
      </div>
      <ui-feedback-list></ui-feedback-list>
    `;
  }
}

class TaskbarComponent extends HTMLElement {
  constructor() {
    super();
    const apps = [
      ['taskView', ''], ['edge', ''], ['outlook', 'mail'], ['explorer', ''], ['store', ''], ['zoom', 'running'],
      ['chromeViolet', ''], ['chromeCheese', 'current'], ['chromePink', 'running'], ['chrome', ''],
      ['sticky', 'alert'], ['telegram', 'alert'], ['chromePink', ''], ['calculator', 'running']
    ];
    this.attachShadow({mode: 'open'}).innerHTML = `
      <style>
        :host {
          display: flex;
          height: 40px;
          background: linear-gradient(90deg, #20363e 0 55%, #1a2540 85%);
          color: #fff;
          font-family: var(--font-system);
          font-size: 14px;
        }

        button {
          position: relative;
          display: flex;
          align-items: center;
          justify-content: center;
          box-sizing: border-box;
          width: 49px;
          padding: 0;
          border: 0;
          background: none;
          color: inherit;
          font: inherit;
        }

        .start {
          width: 48px;
        }

        .search {
          display: flex;
          align-items: center;
          box-sizing: border-box;
          width: 289px;
          padding-left: 11px;
          border: 1px solid #b8b8b8;
          background: #f2f2f2;
          color: #222;
        }

        .search input {
          flex: 1;
          min-width: 0;
          padding: 0 0 0 11px;
          border: 0;
          background: none;
          font: 14px var(--font-system);
        }

        .search input::placeholder {
          color: #333;
          opacity: 1;
        }

        .running::after {
          content: "";
          position: absolute;
          bottom: 0;
          left: 4px;
          right: 4px;
          height: 2px;
          background: #76b9ed;
        }

        .current {
          border-bottom: 2px solid #76b9ed;
          background: #4e626a;
        }

        .alert {
          border-bottom: 2px solid #ff7200;
          border-right: 1px solid #20363e;
          background: #a56a35;
        }

        .count {
          position: absolute;
          left: 22px;
          bottom: 4px;
          padding: 0 3px;
          border: 1px solid #8a9296;
          border-radius: 8px;
          background: #2b3338;
          font-size: 11px;
          font-weight: 600;
          line-height: 14px;
        }

        .tray {
          display: flex;
          align-items: center;
          margin-left: auto;
        }

        .weather {
          display: flex;
          gap: 8px;
          align-items: center;
          width: auto;
          margin-right: 24px;
        }

        .status {
          display: flex;
          align-items: center;
          gap: 11px;
        }

        .clock {
          width: 70px;
          font-size: 11px;
          line-height: 18px;
          text-align: center;
        }

        .notify {
          justify-content: flex-start;
          width: 47px;
          height: 40px;
          margin-right: 3px;
          padding-left: 9px;
          border-right: 1px solid #6e7688;
        }

        .notify span {
          position: absolute;
          right: 13px;
          bottom: 5px;
          width: 16px;
          border-radius: 50%;
          background: #33363c;
          box-shadow: 0 0 0 1px #8a8d94;
          font-size: 11px;
          line-height: 16px;
        }
      </style>
      <button class="start" aria-label="Start"><ui-icon name="windows"></ui-icon></button>
      <div class="search">
        <ui-icon name="lens"></ui-icon>
        <input type="text" placeholder="Type here to search" aria-label="Type here to search">
        <ui-icon name="planets" width="68" height="38"></ui-icon>
      </div>
      ${apps.map(([name, state]) => `
        <button class="${state}" aria-label="${name}"><ui-icon name="${name}" width="${name === 'taskView' ? 16 : name === 'outlook' || name === 'explorer' ? 22 : 24}"></ui-icon>${state === 'mail' ? '<span class="count">99+</span>' : ''}</button>
      `).join('')}
      <div class="tray">
        <button class="weather"><ui-icon name="weather" width="24"></ui-icon><span>26°C</span><span>Mostly cloudy</span></button>
        <div class="status">
          <ui-icon name="up" width="12"></ui-icon>
          <ui-icon name="mic" width="12" height="18"></ui-icon>
          <ui-icon name="speaker" width="18" height="16"></ui-icon>
        </div>
        <div class="clock">6:42 AM<br>1/11/2024</div>
        <button class="notify" aria-label="Notifications"><ui-icon name="notify" width="16"></ui-icon><span>1</span></button>
      </div>
    `;
  }
}

customElements.define('ui-icon', IconComponent);
customElements.define('ui-card', CardComponent);
customElements.define('ui-action-select', ActionSelectComponent);
customElements.define('ui-metrics', MetricsComponent);
customElements.define('ui-feedback-list', FeedbackListComponent);
customElements.define('ui-tab-strip', TabStripComponent);
customElements.define('ui-toolbar', ToolbarComponent);
customElements.define('ui-header', HeaderComponent);
customElements.define('ui-feedback-manager', FeedbackManagerComponent);
customElements.define('ui-page', PageComponent);
customElements.define('ui-taskbar', TaskbarComponent);
customElements.define('ui-desktop', DesktopComponent);
</script>
</body>
</html>
